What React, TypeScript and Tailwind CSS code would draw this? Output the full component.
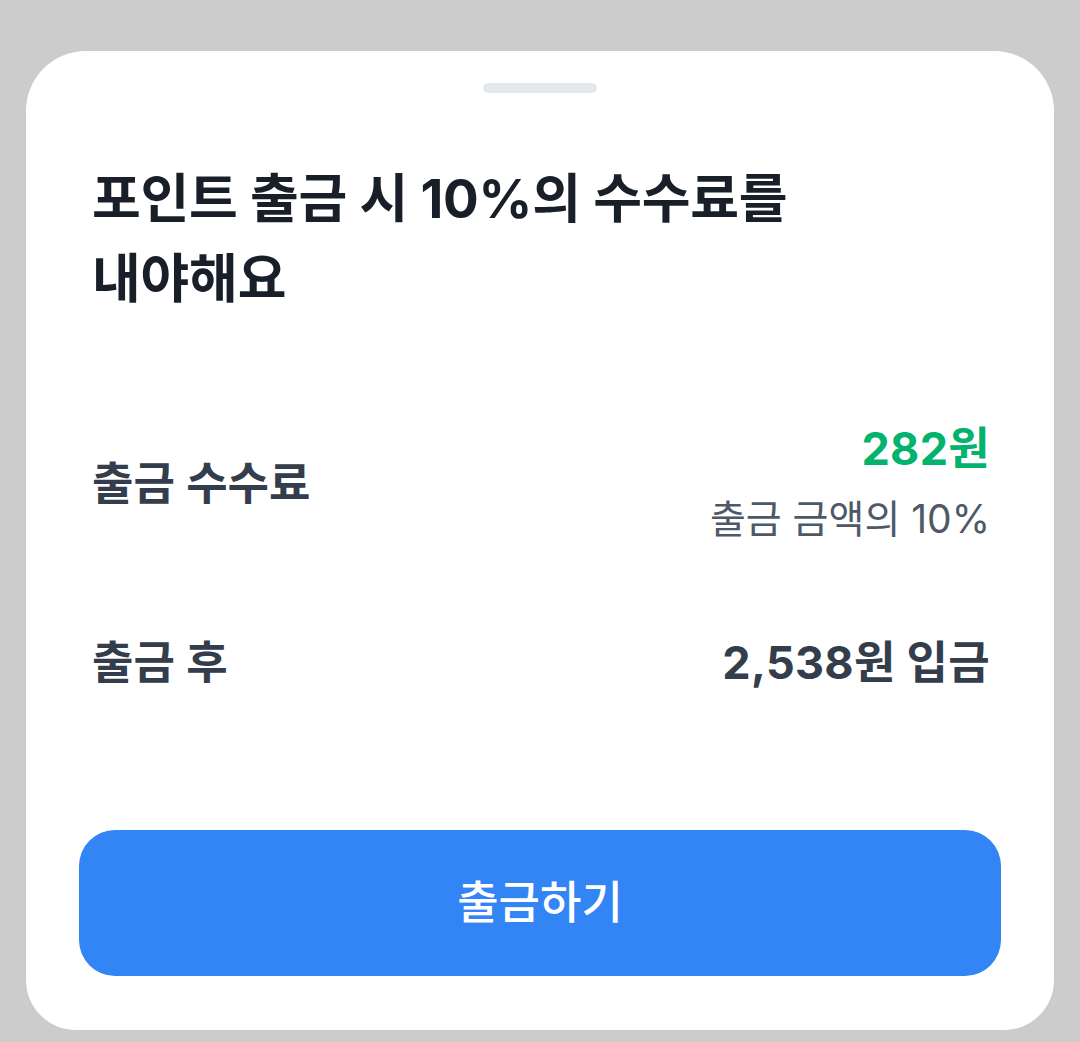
export default function App() {
  const font = { fontFamily: 'Inter, "Noto Sans CJK KR", "Noto Sans", sans-serif' };
  return (
    <div className="min-h-[1042px] bg-[#cccccc] pt-[51px] px-[26px] pb-[12px]" style={font}>
      <div className="w-[1028px] h-[979px] bg-white rounded-t-[60px] rounded-b-[50px] flex flex-col">
        <div className="mt-[32px] mx-auto w-[114px] h-[10px] rounded-full bg-[#e5e8eb]" />
        <h1 className="mt-[66px] px-[66px] text-[53px] leading-[80px] font-bold text-[#191f28] tracking-[-0.2px]">
          포인트 출금 시 10%의 수수료를
          <br />
          내야해요
        </h1>
        <div className="mt-[100px] pl-[66px] pr-[64px] flex items-center justify-between">
          <span className="text-[45px] leading-[60px] font-semibold text-[#333d4b]">출금 수수료</span>
          <div className="flex flex-col items-end gap-[10px]">
            <span className="text-[45px] leading-[60px] font-bold text-[#03b26c] tracking-[0.3px]">282원</span>
            <span className="text-[39px] leading-[60px] text-[#4e5968]">출금 금액의 10%</span>
          </div>
        </div>
        <div className="mt-[84px] pl-[66px] pr-[64px] flex items-center justify-between">
          <span className="text-[45px] leading-[60px] font-semibold text-[#333d4b]">출금 후</span>
          <span className="text-[45px] leading-[60px] font-bold text-[#333d4b] tracking-[0.3px]">2,538원 입금</span>
        </div>
        <button className="mt-auto mb-[54px] mx-[53px] h-[146px] rounded-[36px] bg-[#3385f5] text-white text-[45px] font-medium">
          출금하기
        </button>
      </div>
    </div>
  );
}
